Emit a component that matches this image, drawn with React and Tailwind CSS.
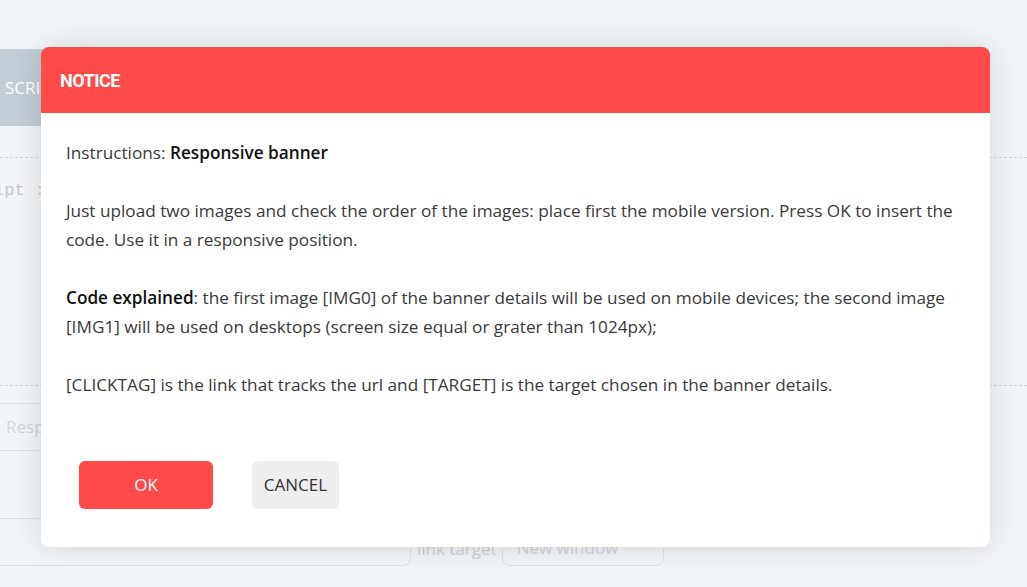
import React from 'react'

function BackgroundPage() {
  return (
    <div className="relative h-[587px] w-full overflow-hidden bg-[#f3f6f9] font-['Open_Sans',sans-serif]">
      {/* tab strip */}
      <div className="pt-[49px]">
        <div className="flex h-[77px] w-[120px] items-center overflow-hidden bg-[#c3ced6] pl-[5px] text-[17px] text-white">
          SCRIPT
        </div>
      </div>

      {/* code area */}
      <div className="mt-[31px] h-[229px] border-y border-dashed border-[#cfd6dc]">
        <p className="-ml-[6px] mt-[20px] font-['Liberation_Mono',monospace] text-[17px] text-[#c8c8c8]">ipt :</p>
      </div>

      {/* name input */}
      <div className="mt-[17px] flex h-[48px] w-[420px] items-center border-y border-[#dde2e6] pl-[6px] text-[17px] text-[#d0d5da]">
        Responsive
      </div>

      {/* link row */}
      <div className="mt-[55px] flex items-end">
        <div className="h-[48px] w-[411px] rounded-br-lg border-y border-r border-[#dde2e6]" />
        <span className="ml-[6px] pb-[6px] text-[17px] leading-[22px] text-[#cdd2d6]">link target</span>
        <div className="ml-[5px] flex h-[60px] w-[162px] items-end rounded-lg border border-[#dde2e6] pb-[6px] pl-[14px] text-[17px] leading-[22px] text-[#d0d5da]">
          New window
        </div>
      </div>
    </div>
  )
}

function NoticeModal() {
  return (
    <div className="absolute left-[41px] top-[47px] h-[500px] w-[949px] overflow-hidden rounded-lg bg-white shadow-[0_0_32px_rgba(0,0,0,0.14)] font-['Open_Sans',sans-serif]">
      <div className="flex h-[66px] items-center bg-[#ff4a4a] pl-[19px] font-['Roboto',sans-serif] text-[18px] font-bold tracking-[-0.5px] text-white">
        NOTICE
      </div>
      <div className="whitespace-nowrap px-[25px] pt-[25px] text-[17.2px] leading-[29px] text-[#3a3a3a]">
        <p>
          Instructions: <b className="font-semibold text-[#111]">Responsive banner</b>
        </p>
        <p className="mt-[29px]">
          Just upload two images and check the order of the images: place first the mobile version. Press OK to insert the
          <br />
          code. Use it in a responsive position.
        </p>
        <p className="mt-[29px]">
          <b className="font-semibold text-[#111]">Code explained</b>: the first image [IMG0] of the banner details will be used on mobile devices; the second image
          <br />
          [IMG1] will be used on desktops (screen size equal or grater than 1024px);
        </p>
        <p className="mt-[29px]">
          [CLICKTAG] is the link that tracks the url and [TARGET] is the target chosen in the banner details.
        </p>
      </div>
      <div className="mt-[62px] flex gap-[39px] pl-[38px]">
        <button className="h-[48px] w-[134px] rounded-md bg-[#ff4a4a] text-[17px] text-white">OK</button>
        <button className="h-[48px] w-[87px] rounded-md bg-[#eeeeee] text-[17px] text-[#333]">CANCEL</button>
      </div>
    </div>
  )
}

export default function App() {
  return (
    <div className="relative h-[587px] w-[1027px]">
      <BackgroundPage />
      <NoticeModal />
    </div>
  )
}
